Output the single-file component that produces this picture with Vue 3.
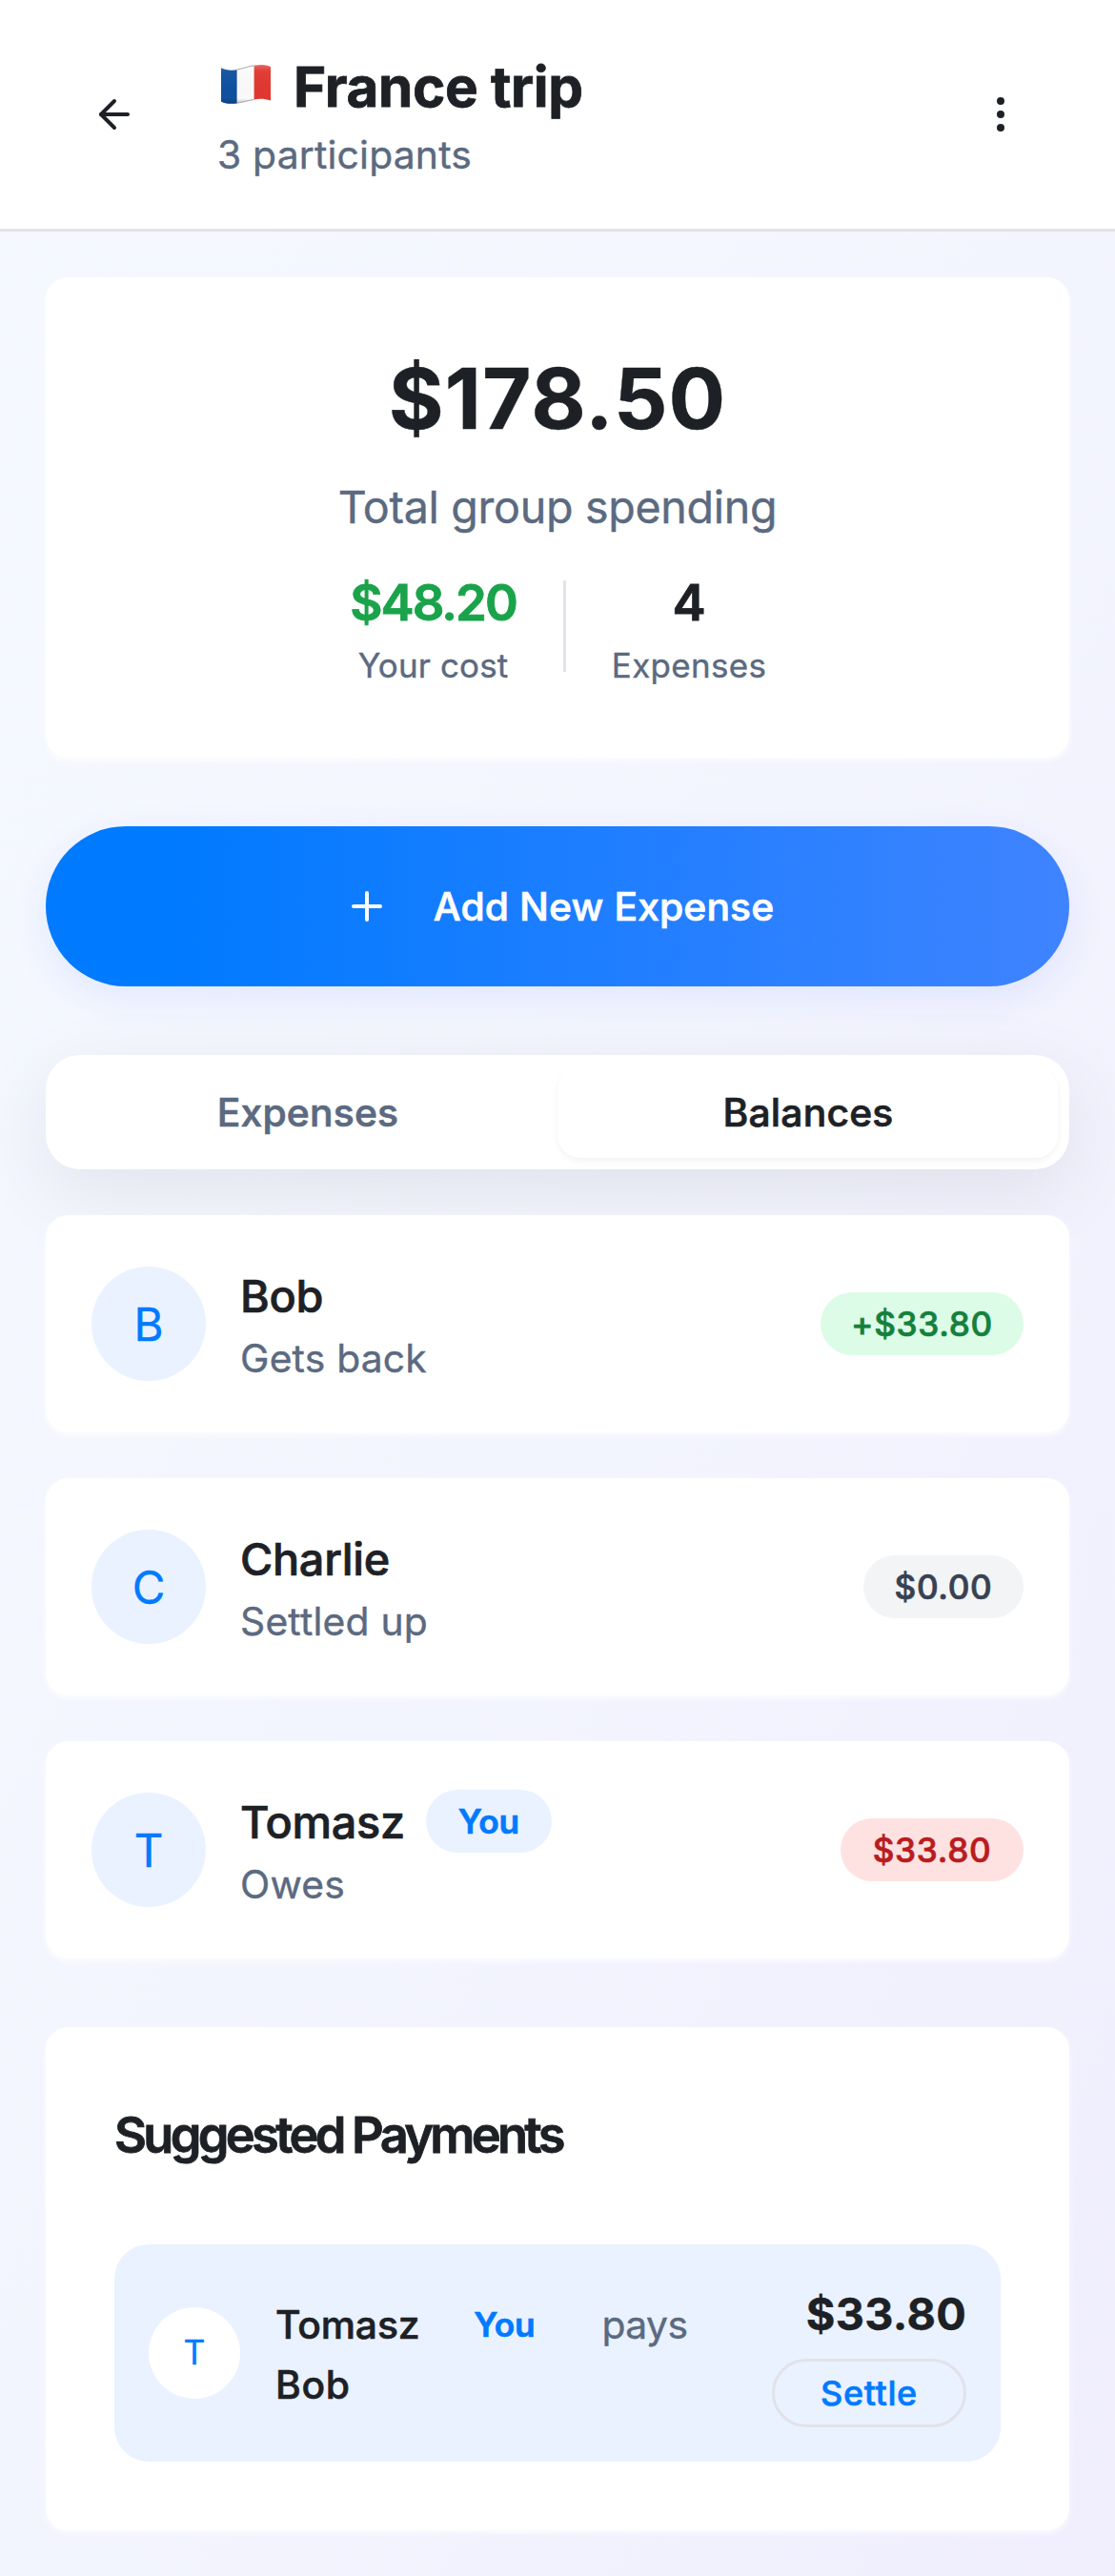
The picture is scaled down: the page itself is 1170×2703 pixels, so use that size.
<script setup>
const members = [
  { initial: 'B', name: 'Bob', status: 'Gets back', amount: '+$33.80', tone: 'credit' },
  { initial: 'C', name: 'Charlie', status: 'Settled up', amount: '$0.00', tone: 'even' },
  { initial: 'T', name: 'Tomasz', status: 'Owes', amount: '$33.80', tone: 'debt', you: true },
]
</script>

<template>
  <div class="page">
    <header class="header">
      <svg class="icon" viewBox="0 0 24 24" fill="none" stroke="currentColor" stroke-width="2" stroke-linecap="round" stroke-linejoin="round">
        <path d="m12 19-7-7 7-7" />
        <path d="M19 12H5" />
      </svg>
      <div class="heading">
        <h1 class="title">
          <svg class="flag" viewBox="0 0 60 44" width="60" height="44">
            <defs>
              <clipPath id="wave">
                <path d="M4 5.2C9 7.6 15 8.4 22 6.8C31 4.8 38 2.2 46 2C50 2 54 3 56 4.2V39.6C50 37.4 44 37.2 37 38.8C29 40.6 23 42.8 15 42.8C10 42.8 6 41.6 4 40.4Z" />
              </clipPath>
              <linearGradient id="shade" x1="0" y1="0" x2="0" y2="1">
                <stop offset="0" stop-color="#fff" stop-opacity=".3" />
                <stop offset=".2" stop-color="#fff" stop-opacity=".04" />
                <stop offset=".85" stop-color="#000" stop-opacity="0" />
                <stop offset="1" stop-color="#000" stop-opacity=".3" />
              </linearGradient>
            </defs>
            <g clip-path="url(#wave)">
              <rect x="3" y="0" width="18" height="44" fill="#0f519f" />
              <rect x="20.6" y="0" width="19" height="44" fill="#fafafa" />
              <rect x="38.6" y="0" width="18" height="44" fill="#e0372f" />
              <rect x="3" y="0" width="54" height="44" fill="url(#shade)" />
            </g>
            <path d="M20.6 7.2C28 5.6 33 3.4 38.6 2.7M20.6 42.2C28 41 33 39.4 38.6 38.5" fill="none" stroke="#a9a9a9" stroke-width="1" />
          </svg>
          <span>France trip</span>
        </h1>
        <p class="subtitle">3 participants</p>
      </div>
      <svg class="icon" viewBox="0 0 24 24" fill="currentColor">
        <circle cx="12" cy="5" r="2" />
        <circle cx="12" cy="12" r="2" />
        <circle cx="12" cy="19" r="2" />
      </svg>
    </header>

    <main class="content">
      <section class="card summary">
        <div class="total">$178.50</div>
        <div class="total-label">Total group spending</div>
        <div class="stats">
          <div class="stat cost">
            <span class="stat-value green">$48.20</span>
            <span class="stat-label">Your cost</span>
          </div>
          <div class="divider"></div>
          <div class="stat count">
            <span class="stat-value">4</span>
            <span class="stat-label wide">Expenses</span>
          </div>
        </div>
      </section>

      <button class="add">
        <svg class="icon" viewBox="0 0 24 24" fill="none" stroke="currentColor" stroke-width="2" stroke-linecap="round">
          <path d="M5 12h14M12 5v14" />
        </svg>
        <span>Add New Expense</span>
      </button>

      <nav class="tabs">
        <button class="tab">Expenses</button>
        <button class="tab active">Balances</button>
      </nav>

      <ul class="members">
        <li v-for="m in members" :key="m.name" class="card member">
          <div class="avatar">{{ m.initial }}</div>
          <div class="who">
            <div class="name">
              <span>{{ m.name }}</span>
              <span v-if="m.you" class="badge you">You</span>
            </div>
            <div class="status">{{ m.status }}</div>
          </div>
          <span class="badge" :class="m.tone">{{ m.amount }}</span>
        </li>
      </ul>

      <section class="card suggested">
        <h2 class="section-title">Suggested Payments</h2>
        <div class="payment">
          <div class="avatar small">T</div>
          <div class="route">
            <div class="payer">
              <span>Tomasz</span>
              <span class="badge you">You</span>
              <span class="pays">pays</span>
            </div>
            <div class="payee">Bob</div>
          </div>
          <div class="action">
            <div class="amount">$33.80</div>
            <button class="settle">Settle</button>
          </div>
        </div>
      </section>
    </main>
  </div>
</template>

<style>
body {
  margin: 0;
}
</style>

<style scoped>
* {
  box-sizing: border-box;
  margin: 0;
  padding: 0;
}

.page {
  width: 1170px;
  height: 2703px;
  font-family: Inter, "Liberation Sans", sans-serif;
  color: #1d2125;
  white-space: nowrap;
  -webkit-text-stroke: 0.4px currentColor;
  background: linear-gradient(115deg, #f5f9ff 0%, #f3f5fe 50%, #f0eefd 100%);
}

button {
  border: 0;
  background: none;
  font-family: inherit;
  color: inherit;
}

.icon {
  width: 48px;
  height: 48px;
  flex: none;
}

.header {
  display: flex;
  align-items: center;
  height: 243px;
  padding: 0 96px;
  background: #fff;
  border-bottom: 3px solid #e2e2e9;
}

.heading {
  flex: 1;
  padding-left: 84px;
}

.title {
  display: flex;
  align-items: center;
  gap: 20px;
  font-size: 58.4px;
  line-height: 83px;
  font-weight: 700;
  letter-spacing: -0.35px;
  -webkit-text-stroke-width: 0.8px;
}

.flag {
  margin-top: -5px;
}

.subtitle {
  font-size: 40.8px;
  line-height: 60px;
  letter-spacing: 0.2px;
  color: #5b6a80;
}

.content {
  display: flex;
  flex-direction: column;
  padding: 48px;
}

.card {
  background: #fff;
  border-radius: 24px;
  box-shadow: 0 3px 6px rgba(255, 255, 255, 0.8);
}

.summary {
  height: 504px;
  padding: 72px;
  text-align: center;
}

.total {
  font-size: 88.5px;
  line-height: 109px;
  font-weight: 700;
  letter-spacing: 1px;
}

.total-label {
  margin-top: 24px;
  font-size: 46.6px;
  line-height: 72px;
  letter-spacing: -0.3px;
  color: #5b6a80;
}

.stats {
  display: flex;
  justify-content: center;
  align-items: center;
  gap: 48px;
  margin-top: 23px;
}

.stat {
  display: flex;
  flex-direction: column;
  align-items: center;
}

.cost {
  width: 177px;
}

.count {
  width: 162px;
}

.stat-value {
  font-size: 52.8px;
  line-height: 82px;
  font-weight: 600;
  letter-spacing: -2px;
  -webkit-text-stroke-width: 0.8px;
}

.count .stat-value {
  letter-spacing: 0;
}

.green {
  color: #1aa34a;
}

.stat-label {
  font-size: 34.9px;
  line-height: 50px;
  letter-spacing: 0.17px;
  color: #5b6a80;
}

.stat-label.wide {
  letter-spacing: 0.35px;
}

.divider {
  width: 3px;
  height: 96px;
  background: #e2e2e9;
}

.add {
  display: flex;
  align-items: center;
  justify-content: center;
  gap: 46px;
  height: 168px;
  margin-top: 72px;
  padding-left: 3px;
  border-radius: 84px;
  color: #fff;
  background: linear-gradient(90deg, #007aff 12%, #3f83ff 100%);
  box-shadow: 0 12px 42px rgba(0, 60, 255, 0.08);
  font-size: 40.8px;
  font-weight: 500;
  letter-spacing: 0.12px;
  -webkit-text-stroke-width: 0.7px;
}

.tabs {
  display: flex;
  height: 120px;
  margin-top: 72px;
  padding: 12px;
  border-radius: 36px;
  background: #fff;
  box-shadow: 0 24px 84px rgba(0, 0, 0, 0.08);
}

.tab {
  flex: 1;
  padding-left: 1px;
  border-radius: 24px;
  font-size: 40.8px;
  font-weight: 500;
  letter-spacing: 0.2px;
  color: #5b6a80;
  -webkit-text-stroke-width: 0.7px;
}

.tab.active {
  color: #1d2125;
  background: #fff;
  box-shadow: 0 3px 6px rgba(0, 0, 0, 0.05);
}

.members {
  position: relative;
  display: flex;
  flex-direction: column;
  gap: 48px;
  margin-top: 48px;
  list-style: none;
}

.member {
  display: flex;
  align-items: center;
  height: 228px;
  padding: 0 48px;
}

.avatar {
  display: flex;
  align-items: center;
  justify-content: center;
  flex: none;
  width: 120px;
  height: 120px;
  border-radius: 50%;
  background: #eaf2ff;
  color: #007aff;
  font-size: 47.4px;
}

.avatar.small {
  width: 96px;
  height: 96px;
  padding-bottom: 1px;
  background: #fff;
  font-size: 35.4px;
}

.who {
  flex: 1;
  padding-left: 36px;
}

.name {
  display: flex;
  align-items: center;
  gap: 22px;
  height: 73px;
  font-size: 46.8px;
  font-weight: 500;
  letter-spacing: -0.3px;
  -webkit-text-stroke-width: 0.7px;
}

.status {
  font-size: 40.8px;
  line-height: 59px;
  letter-spacing: 0.2px;
  color: #5b6a80;
}

.badge {
  display: flex;
  align-items: center;
  justify-content: center;
  flex: none;
  height: 66px;
  padding-bottom: 1px;
  border-radius: 33px;
  font-size: 35.2px;
  font-weight: 500;
  letter-spacing: 0.65px;
  -webkit-text-stroke-width: 0.7px;
}

.credit {
  width: 213px;
  background: #dcfce7;
  color: #15803d;
}

.even {
  width: 168px;
  background: #f3f4f6;
  color: #374151;
}

.debt {
  width: 192px;
  background: #fee2e2;
  color: #b91c1c;
}

.you {
  width: 132px;
  background: #eaf2ff;
  color: #007aff;
  font-weight: 600;
  letter-spacing: -0.1px;
}

.name .you {
  margin-top: -1px;
}

.suggested {
  height: 528px;
  margin-top: 72px;
  padding: 72px;
}

.section-title {
  margin-bottom: 74px;
  font-size: 52.4px;
  line-height: 82px;
  font-weight: 600;
  letter-spacing: -3.72px;
  -webkit-text-stroke-width: 0.8px;
}

.payment {
  display: flex;
  align-items: center;
  height: 228px;
  padding: 36px;
  border-radius: 36px;
  background: #eaf2ff;
}

.route {
  flex: 1;
  padding-left: 37px;
  font-size: 40.8px;
  font-weight: 500;
  letter-spacing: -0.15px;
  -webkit-text-stroke-width: 0.6px;
}

.payer {
  display: flex;
  align-items: center;
  height: 66px;
}

.payer .you {
  margin: 0 36px 0 23px;
}

.pays {
  font-weight: 400;
  color: #5b6a80;
  letter-spacing: -0.5px;
  -webkit-text-stroke-width: 0.4px;
}

.payee {
  line-height: 60px;
  letter-spacing: 0.6px;
}

.action {
  display: flex;
  flex-direction: column;
  align-items: flex-end;
}

.amount {
  font-size: 46.8px;
  line-height: 74px;
  font-weight: 700;
  letter-spacing: 0.3px;
}

.settle {
  width: 204px;
  height: 72px;
  margin-top: 10px;
  padding-bottom: 1px;
  border: 3px solid #e2e2e9;
  border-radius: 36px;
  color: #007aff;
  font-size: 36px;
  font-weight: 500;
  letter-spacing: 0.6px;
  -webkit-text-stroke-width: 0.6px;
}
</style>
